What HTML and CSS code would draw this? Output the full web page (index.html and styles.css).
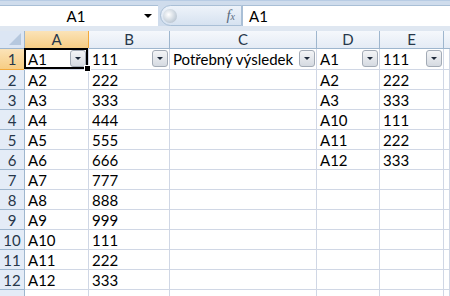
FILE: index.html
```html
<!DOCTYPE html>
<html lang="cs">
<head>
  <meta charset="UTF-8" />
  <title>Sešit</title>
  <link rel="stylesheet" href="styles.css">
</head>
<body>
  <div class="formula-bar">
    <div class="name-box">
      <span class="name-text">A1</span>
      <span class="name-arrow"></span>
    </div>
    <div class="fx-pill">
      <span class="knob"></span>
      <span class="fx">f<sub>x</sub></span>
    </div>
    <div class="formula-input">A1</div>
  </div>

  <div class="sheet">
    <div class="corner"><span class="corner-tri"></span></div>
    <div class="col-head active">A</div>
    <div class="col-head">B</div>
    <div class="col-head">C</div>
    <div class="col-head">D</div>
    <div class="col-head">E</div>
    <div class="col-head last"></div>

    <div class="row-head active">1</div>
    <div class="cell selected">A1<span class="filter"></span><span class="handle"></span></div>
    <div class="cell">111<span class="filter"></span></div>
    <div class="cell">Potřebný výsledek<span class="filter"></span></div>
    <div class="cell">A1<span class="filter"></span></div>
    <div class="cell">111<span class="filter"></span></div>
    <div class="cell"></div>
  </div>

  <script>
    // remaining rows
    const rows = [
      ['A2', '222', '', 'A2', '222'],
      ['A3', '333', '', 'A3', '333'],
      ['A4', '444', '', 'A10', '111'],
      ['A5', '555', '', 'A11', '222'],
      ['A6', '666', '', 'A12', '333'],
      ['A7', '777', '', '', ''],
      ['A8', '888', '', '', ''],
      ['A9', '999', '', '', ''],
      ['A10', '111', '', '', ''],
      ['A11', '222', '', '', ''],
      ['A12', '333', '', '', ''],
      ['', '', '', '', '']
    ];
    const sheet = document.querySelector('.sheet');
    rows.forEach((r, i) => {
      const head = document.createElement('div');
      head.className = 'row-head';
      head.textContent = i < 11 ? i + 2 : '';
      sheet.appendChild(head);
      r.concat(['']).forEach(v => {
        const c = document.createElement('div');
        c.className = 'cell';
        c.textContent = v;
        sheet.appendChild(c);
      });
    });
  </script>
</body>
</html>
```

FILE: styles.css
```css
body {
  margin: 0;
  font-family: Lato, "Open Sans", sans-serif;
  font-size: 15px;
  color: #000;
  background: #fff;
  width: 450px;
  height: 296px;
  overflow: hidden;
}

.formula-bar {
  display: flex;
  height: 21px;
  padding-top: 4px;
  background: #cfdcec;
  border-top: 1px solid #b8cce4;
  border-bottom: 5px solid #dfe7f1;
  box-sizing: content-box;
}

.name-box {
  width: 158px;
  display: flex;
  align-items: center;
  background: #fff;
  border-top: 1px solid #a9bfd6;
}

.name-text {
  flex: 1;
  text-align: center;
  padding-left: 8px;
}

.name-arrow {
  width: 0;
  height: 0;
  border-left: 4px solid transparent;
  border-right: 4px solid transparent;
  border-top: 4px solid #000;
  margin-right: 6px;
}

.fx-pill {
  width: 82px;
  margin-left: 2px;
  display: flex;
  align-items: center;
  justify-content: space-between;
  background: linear-gradient(#eef3fa, #d6e2f0);
  border: 1px solid #a9bfd6;
  border-radius: 11px 0 0 11px;
  box-sizing: border-box;
}

.knob {
  width: 14px;
  height: 14px;
  margin-left: 2px;
  border-radius: 50%;
  background: radial-gradient(circle at 40% 40%, #ffffff, #c8d2dc 60%, #a9b4c0);
}

.fx {
  font-family: "Liberation Serif", serif;
  font-style: italic;
  font-size: 15px;
  color: #5b6b7d;
  margin-right: 6px;
}

.fx sub {
  font-size: 10px;
  vertical-align: 0;
}

.formula-input {
  flex: 1;
  background: #fff;
  border-top: 1px solid #a9bfd6;
  border-left: 1px solid #a9bfd6;
  padding-left: 6px;
  line-height: 20px;
}

.sheet {
  display: grid;
  grid-template-columns: 25px 64px 81px 147px 63px 64px 1fr;
  grid-template-rows: 18px 21px repeat(12, 20px);
}

.corner {
  position: relative;
  background: #dce6f4;
  border-right: 1px solid #9eb6ce;
  border-bottom: 1px solid #9eb6ce;
}

.corner-tri {
  position: absolute;
  right: 3px;
  bottom: 3px;
  width: 0;
  height: 0;
  border-left: 12px solid transparent;
  border-bottom: 12px solid #b6c8de;
}

.col-head {
  background: linear-gradient(#f5f8fc, #e4ebf5);
  border-right: 1px solid #9eb6ce;
  border-bottom: 1px solid #9eb6ce;
  text-align: center;
  line-height: 17px;
  color: #27374a;
}

.col-head.active,
.row-head.active {
  background: linear-gradient(#fbe3b8, #f6cd84);
  border-color: #f2a93b;
}

.col-head.last {
  border-right: none;
}

.row-head {
  background: #e4ecf7;
  border-right: 1px solid #9eb6ce;
  border-bottom: 1px solid #9eb6ce;
  text-align: center;
  line-height: 20px;
  color: #27374a;
}

.cell {
  position: relative;
  border-right: 1px solid #d0d7e5;
  border-bottom: 1px solid #d0d7e5;
  padding-left: 3px;
  line-height: 20px;
  white-space: nowrap;
}

.cell.selected {
  box-shadow: inset 0 0 0 2px #000;
  margin: -1px 0 0 -1px;
  padding-left: 4px;
  padding-top: 1px;
}

.filter {
  position: absolute;
  right: 1px;
  top: 1px;
  width: 16px;
  height: 17px;
  box-sizing: border-box;
  border: 1px solid #a3abb6;
  border-radius: 3px;
  background: linear-gradient(#f4f5f7, #d5dae1);
}

.filter::after {
  content: "";
  position: absolute;
  left: 4px;
  top: 6px;
  border-left: 3px solid transparent;
  border-right: 3px solid transparent;
  border-top: 3px solid #1f2a3a;
}

.selected .filter {
  right: 2px;
  top: 2px;
}

.handle {
  position: absolute;
  right: -3px;
  bottom: -3px;
  width: 5px;
  height: 5px;
  background: #000;
  border: 1px solid #fff;
  z-index: 2;
}
```
